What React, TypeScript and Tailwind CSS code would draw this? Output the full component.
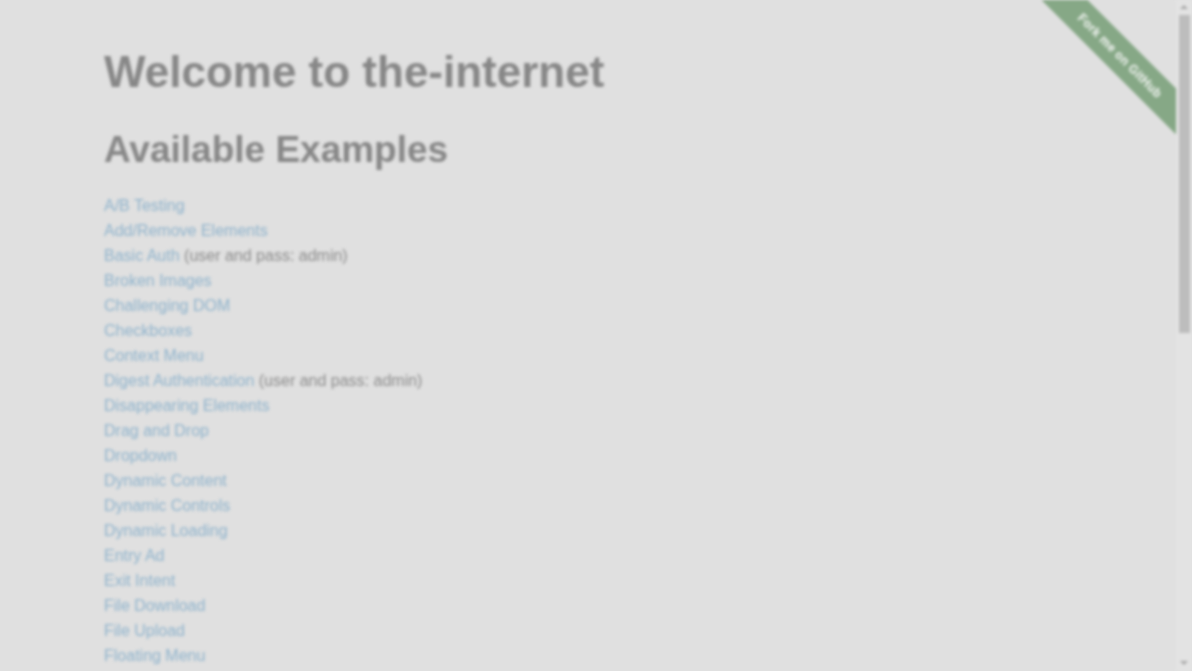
const examples: { label: string; note?: string }[] = [
  { label: "A/B Testing" },
  { label: "Add/Remove Elements" },
  { label: "Basic Auth", note: "(user and pass: admin)" },
  { label: "Broken Images" },
  { label: "Challenging DOM" },
  { label: "Checkboxes" },
  { label: "Context Menu" },
  { label: "Digest Authentication", note: "(user and pass: admin)" },
  { label: "Disappearing Elements" },
  { label: "Drag and Drop" },
  { label: "Dropdown" },
  { label: "Dynamic Content" },
  { label: "Dynamic Controls" },
  { label: "Dynamic Loading" },
  { label: "Entry Ad" },
  { label: "Exit Intent" },
  { label: "File Download" },
  { label: "File Upload" },
  { label: "Floating Menu" },
];

function ForkRibbon() {
  return (
    <div className="absolute right-0 top-0 h-[149px] w-[149px] overflow-hidden">
      <a
        href="#"
        className="absolute left-[-32px] top-[39px] flex h-[33px] w-[250px] rotate-45 items-center justify-center bg-[#86a886] text-[12px] font-bold tracking-wide text-[#f4f6f4]"
      >
        Fork me on GitHub
      </a>
    </div>
  );
}

function Scrollbar() {
  return (
    <div className="flex w-4 shrink-0 flex-col items-center bg-[#e3e3e3]">
      <div className="mt-[5px] h-0 w-0 border-x-[4px] border-b-[4px] border-x-transparent border-b-[#a8a8a8]" />
      <div className="mt-[6px] h-[318px] w-[11px] bg-[#bdbdbd]" />
      <div className="flex-1" />
      <div className="mb-[6px] h-0 w-0 border-x-[4px] border-t-[4px] border-x-transparent border-t-[#a8a8a8]" />
    </div>
  );
}

export default function App() {
  return (
    <div className="h-[671px] w-[1192px] overflow-hidden bg-[#e0e0e0] font-['Liberation_Sans',Arial,sans-serif]">
      <div className="flex h-full blur-[1.4px]">
        <main className="relative flex-1 overflow-hidden">
          <ForkRibbon />
          <div className="px-[104px] pt-[45px]">
            <h1 className="text-[44px] font-bold leading-[53px] text-[#878787]">
              Welcome to the-internet
            </h1>
            <h2 className="mt-[30px] text-[37px] font-bold leading-[44px] text-[#878787]">
              Available Examples
            </h2>
            <ul className="mt-[21px] text-[16px] leading-[25px]">
              {examples.map((e) => (
                <li key={e.label}>
                  <a href="#" className="text-[#8fb3cc]">
                    {e.label}
                  </a>
                  {e.note && <span className="text-[#8c8c8c]"> {e.note}</span>}
                </li>
              ))}
            </ul>
          </div>
        </main>
        <Scrollbar />
      </div>
    </div>
  );
}
